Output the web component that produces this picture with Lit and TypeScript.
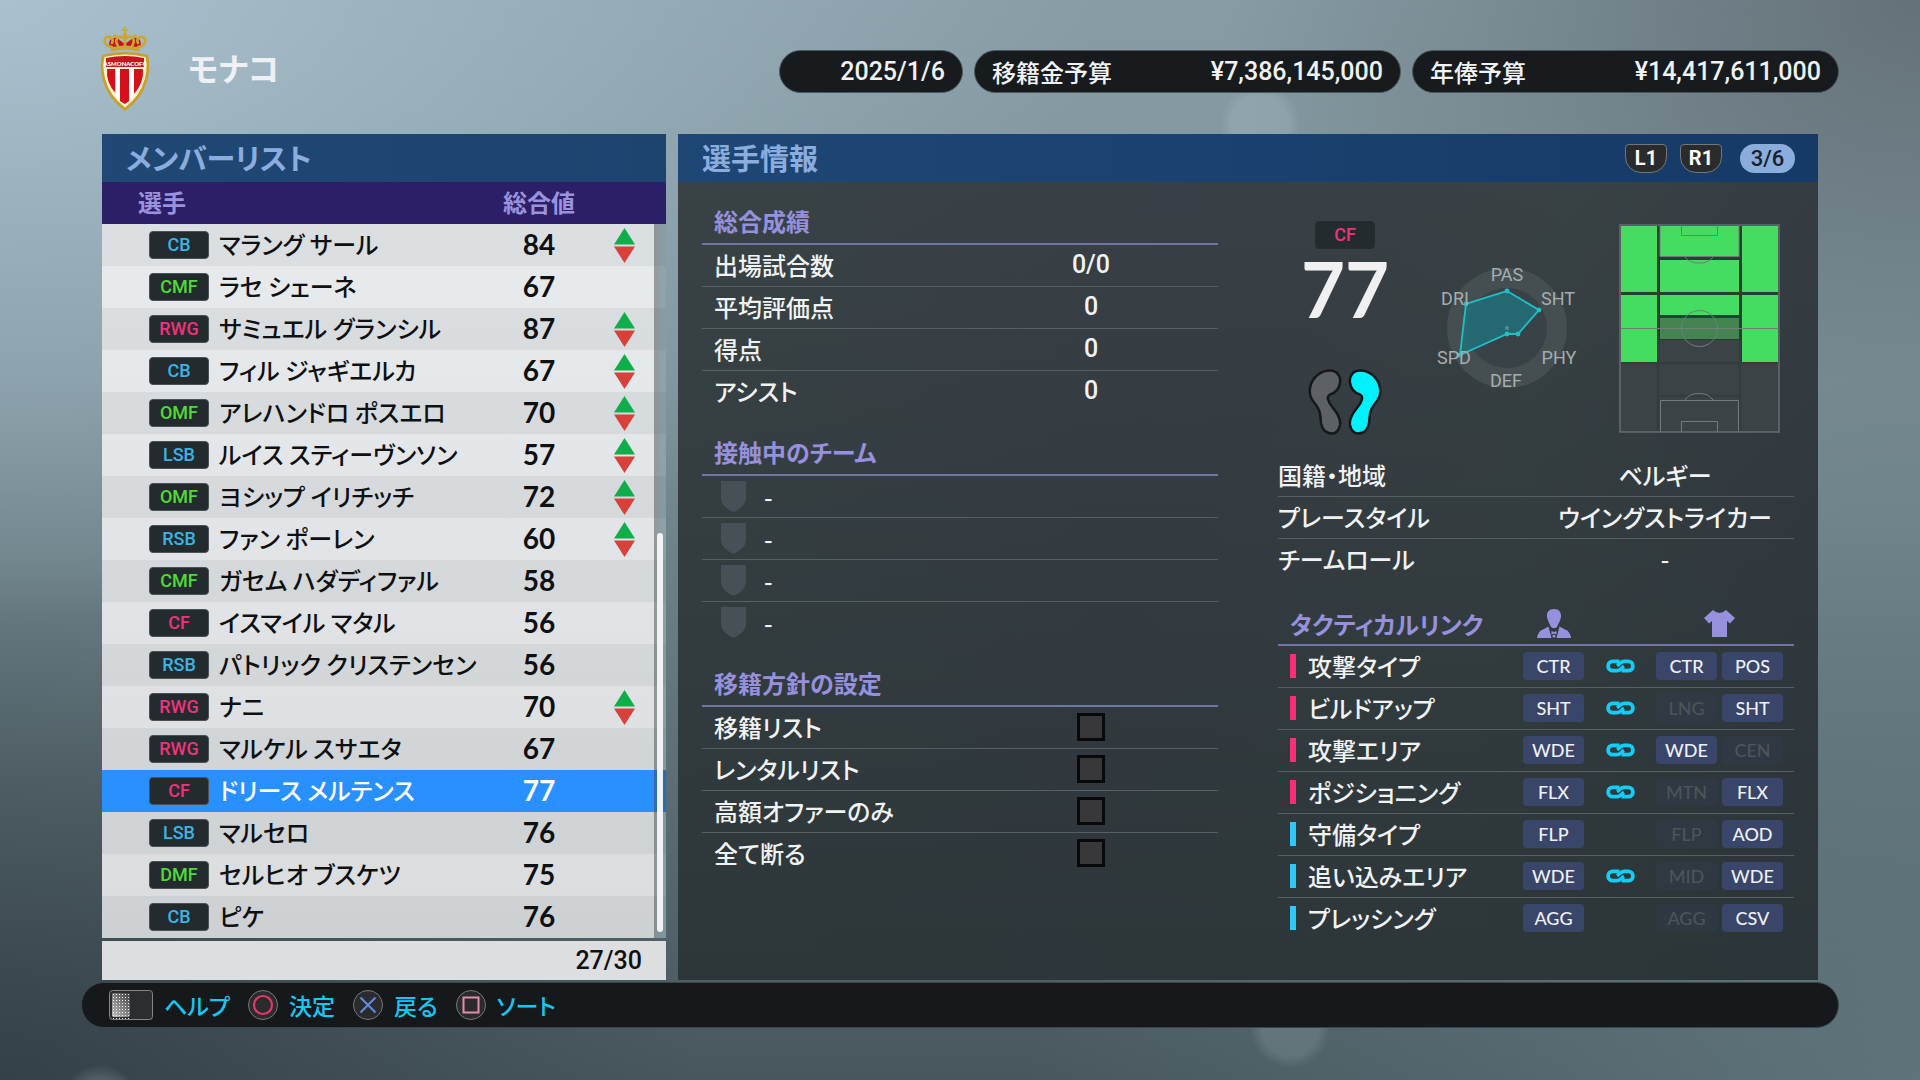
import { LitElement, html, svg, css, nothing } from "lit";
import { customElement, state } from "lit/decorators.js";
import { classMap } from "lit/directives/class-map.js";

type Line = "fw" | "mf" | "df";

interface Member {
  pos: string;
  name: string;
  rating: number;
  trade?: boolean;
}

const MEMBERS: Member[] = [
  { pos: "CB", name: "マラング サール", rating: 84, trade: true },
  { pos: "CMF", name: "ラセ シェーネ", rating: 67 },
  { pos: "RWG", name: "サミュエル グランシル", rating: 87, trade: true },
  { pos: "CB", name: "フィル ジャギエルカ", rating: 67, trade: true },
  { pos: "OMF", name: "アレハンドロ ポスエロ", rating: 70, trade: true },
  { pos: "LSB", name: "ルイス スティーヴンソン", rating: 57, trade: true },
  { pos: "OMF", name: "ヨシップ イリチッチ", rating: 72, trade: true },
  { pos: "RSB", name: "ファン ポーレン", rating: 60, trade: true },
  { pos: "CMF", name: "ガセム ハダディファル", rating: 58 },
  { pos: "CF", name: "イスマイル マタル", rating: 56 },
  { pos: "RSB", name: "パトリック クリステンセン", rating: 56 },
  { pos: "RWG", name: "ナニ", rating: 70, trade: true },
  { pos: "RWG", name: "マルケル スサエタ", rating: 67 },
  { pos: "CF", name: "ドリース メルテンス", rating: 77 },
  { pos: "LSB", name: "マルセロ", rating: 76 },
  { pos: "DMF", name: "セルヒオ ブスケツ", rating: 75 },
  { pos: "CB", name: "ピケ", rating: 76 },
];

const RESULTS: [string, string][] = [
  ["出場試合数", "0/0"],
  ["平均評価点", "0"],
  ["得点", "0"],
  ["アシスト", "0"],
];

const CONTACTS = ["-", "-", "-", "-"];

const POLICIES = ["移籍リスト", "レンタルリスト", "高額オファーのみ", "全て断る"];

const PROFILE: [string, string][] = [
  ["国籍・地域", "ベルギー"],
  ["プレースタイル", "ウイングストライカー"],
  ["チームロール", "-"],
];

interface Tactic {
  side: "attack" | "defence";
  label: string;
  player: string;
  linked: boolean;
  team: [string, boolean][];
}

const TACTICS: Tactic[] = [
  { side: "attack", label: "攻撃タイプ", player: "CTR", linked: true, team: [["CTR", true], ["POS", true]] },
  { side: "attack", label: "ビルドアップ", player: "SHT", linked: true, team: [["LNG", false], ["SHT", true]] },
  { side: "attack", label: "攻撃エリア", player: "WDE", linked: true, team: [["WDE", true], ["CEN", false]] },
  { side: "attack", label: "ポジショニング", player: "FLX", linked: true, team: [["MTN", false], ["FLX", true]] },
  { side: "defence", label: "守備タイプ", player: "FLP", linked: false, team: [["FLP", false], ["AOD", true]] },
  { side: "defence", label: "追い込みエリア", player: "WDE", linked: true, team: [["MID", false], ["WDE", true]] },
  { side: "defence", label: "プレッシング", player: "AGG", linked: false, team: [["AGG", false], ["CSV", true]] },
];

const lineOf = (pos: string): Line =>
  pos.endsWith("MF") ? "mf" : pos === "CF" || pos.endsWith("WG") ? "fw" : "df";

const badge = (pos: string) => html`<span class="badge ${lineOf(pos)}">${pos}</span>`;

const crest = html`
  <svg class="crest" viewBox="0 0 50 86" aria-hidden="true">
    <path d="M10 22C7 14 12 11 17 12L25 18L33 12C38 11 43 14 40 22Q25 17 10 22Z" fill="#c4161f"/>
    <g fill="none" stroke="#cfa52b" stroke-width="2.6" stroke-linecap="round">
      <path d="M25 1V8M22 4H28" stroke-width="1.6"/>
      <path d="M25 9V20M24 12C18 8 14 14 18 20M26 12C32 8 36 14 32 20"/>
      <path d="M12 21C4 20 3 13 7 11C11 10 14 13 12 17M38 21C46 20 47 13 43 11C39 10 36 13 38 17"/>
      <path d="M12 23.500Q25 20 38 23.500" stroke-width="3.400"/>
    </g>
    <circle cx="25" cy="9" r="2.200" fill="#cfa52b"/>
    <circle cx="15" cy="10" r="1.800" fill="#cfa52b"/>
    <circle cx="35" cy="10" r="1.800" fill="#cfa52b"/>
    <path d="M2 29Q25 23 48 29Q51 42 47 55Q42 73 25 85Q8 73 3 55Q-1 42 2 29Z" fill="#c9a02c"/>
    <path d="M4.500 31Q25 26 45.500 31Q48 42 44.500 54Q40 70 25 81.500Q10 70 5.500 54Q2 42 4.500 31Z" fill="#fff3cf"/>
    <path d="M6 32Q25 28 44 32L44 41H6Z" fill="#c4161f"/>
    <path d="M7 43H15.500V67Q6 57 7 43ZM20 43H29V75L25 78L20 75ZM34 43H43Q44 57 34 68Z" fill="#d5101b"/>
    <path d="M15.500 43H20V75L15.500 70ZM29 43H34V70L29 75Z" fill="#ffffff"/>
    <text x="25" y="39.500" text-anchor="middle" font-family="Lato, sans-serif" font-weight="900" font-size="6" fill="#fff">ASMONACOFC</text>
  </svg>`;

const feet = html`
  <svg class="feet" viewBox="0 0 74 66" role="img" aria-label="利き足 右">
    <g stroke="#14181b" stroke-width="2.500" stroke-linejoin="round">
      <path fill="#5d6165" d="M22 1.500C29 1.500 33 7 32 14C31 21 27 24 22 25.500C18 27.500 20 33 25 39C30 45 33 50 32 56C31 61 28 64.500 24 64.500C18 64.500 14 60 13 54C12 46 13 43 8 36C3 30 1 26 2 19C4 8 13 1.500 22 1.500Z"/>
      <path fill="#00f2ff" d="M52 1.500C45 1.500 41 7 42 14C43 21 47 24 52 25.500C56 27.500 54 33 49 39C44 45 41 50 42 56C43 61 46 64.500 50 64.500C56 64.500 60 60 61 54C62 46 61 43 66 36C71 30 73 26 72 19C70 8 61 1.500 52 1.500Z"/>
    </g>
  </svg>`;

const RADAR_LABELS: [string, number, number][] = [
  ["PAS", 70, 19],
  ["SHT", 121, 43],
  ["PHY", 122, 102],
  ["DEF", 69, 125],
  ["SPD", 17, 102],
  ["DRI", 18, 43],
];
const RADAR_POINTS: [number, number][] = [
  [70, 29],
  [102, 48],
  [81, 72],
  [70, 72],
  [23, 93],
  [29, 42],
];

const radar = html`
  <svg class="radar" viewBox="0 0 140 132" role="img" aria-label="能力チャート">
    <circle cx="70" cy="66" r="60" fill="#454f52"/>
    <circle cx="70" cy="66" r="40" fill="#394246"/>
    <polygon points=${RADAR_POINTS.map((p) => p.join(",")).join(" ")} fill="#1f727c" fill-opacity=".8" stroke="#1fc0c8" stroke-width="1.800"/>
    ${RADAR_POINTS.map(([x, y]) => svg`<circle cx=${x} cy=${y} r="2.4" fill="#1fc0c8"/>`)}
    <circle cx="70" cy="66" r="2" fill="#4d9299"/>
    ${RADAR_LABELS.map(([t, x, y]) => svg`<text x=${x} y=${y} text-anchor="middle">${t}</text>`)}
  </svg>`;

const pitch = html`
  <svg class="pitch" viewBox="0 0 161 209" role="img" aria-label="ポジション適性">
    <rect x="1" y="1" width="159" height="207" fill="#3c4347"/>
    <path d="M1 1H160V139H121V116H40V139H1Z" fill="#26402f"/>
    <path d="M39 116V207M121 116V207M1 139H160M40 172H120" stroke="#333c3e" stroke-width="2.500"/>
    <g fill="#45dc62">
      <rect x="2" y="2" width="36" height="66"/><rect x="2" y="71" width="36" height="67"/>
      <rect x="123" y="2" width="36" height="66"/><rect x="123" y="71" width="36" height="67"/>
      <rect x="41" y="2" width="79" height="31"/><rect x="41" y="36" width="79" height="32"/>
      <rect x="41" y="71" width="79" height="20"/>
    </g>
    <rect x="41" y="94" width="79" height="21" fill="#438451"/>
    <g fill="none" stroke="#727c7b" stroke-width="1">
      <path d="M1 104.500H160M41 1V32.500H120V1M62.500 1V11.500H98.500V1M66 33Q70 39 80 39Q90 39 94 33"/>
      <circle cx="80.500" cy="104.500" r="18"/>
      <path d="M41.500 208V176.500H119.500V208M62.500 208V197.500H98.500V208M66 176Q70 169.500 80 169.500Q90 169.500 94 176"/>
      <rect x="1" y="1" width="159" height="207" stroke="#666e72" stroke-width="1.500"/>
    </g>
  </svg>`;

const linkIcon = html`
  <svg class="link" viewBox="0 0 29 14" role="img" aria-label="リンク">
    <g fill="none" stroke="#12cdf5" stroke-width="3.800">
      <path d="M13.500 2.300H6.800a4.700 4.700 0 0 0 0 9.400h4.200c3.600 0 4-2.500 7-4.300"/>
      <path d="M15.500 11.700H22.200a4.700 4.700 0 0 0 0-9.400h-4.200c-3.600 0-4 2.500-7 4.300"/>
    </g>
  </svg>`;

const personIcon = html`
  <svg class="person" viewBox="0 0 34 29" role="img" aria-label="選手">
    <g fill="#9690dd">
      <path d="M17 0C22 0 24.500 3.500 24 8C23.500 12 21 15 20 18Q17 20.500 14 18C13 15 10.500 12 10 8C9.500 3.500 12 0 17 0Z"/>
      <path d="M11.500 17.500L14.500 29H0Q1 22 6 20.500ZM22.500 17.500L19.500 29H34Q33 22 28 20.500Z"/>
      <path d="M14.500 22L17 23L19.500 22V25.500L17 24.500L14.500 25.500ZM17 25.500L19 27L17 29L15 27Z"/>
    </g>
  </svg>`;

const shirtIcon = html`
  <svg class="shirt" viewBox="0 0 31 27" role="img" aria-label="チーム">
    <path fill="#9690dd" d="M9 0Q15.500 6 22 0L31 8L26 13.500L23 11V27H8V11L5 13.500L0 8Z"/>
  </svg>`;

const shieldIcon = html`
  <svg class="shield" viewBox="0 0 25 31" aria-hidden="true">
    <path d="M0 0H25V18Q24 26 12.500 31Q1 26 0 18Z" fill="#485057"/>
  </svg>`;

const tradeIcon = html`
  <svg class="trade" viewBox="0 0 21 35" role="img" aria-label="交渉可">
    <path d="M10.500 0L21 16.500H0Z" fill="#0fae4b"/>
    <path d="M10.500 35L21 18.500H0Z" fill="#d8403a"/>
  </svg>`;

const dots = Array.from({ length: 54 }, (_, i) => [4 + (i % 6) * 3, 4 + Math.floor(i / 6) * 3]);

const touchpadIcon = html`
  <svg class="pad" viewBox="0 0 44 30" aria-hidden="true">
    <defs>
      <linearGradient id="pad" x1="0" y1="1" x2="1" y2="0">
        <stop offset="0" stop-color="#c2c2c2"/><stop offset="1" stop-color="#3c3c3c"/>
      </linearGradient>
    </defs>
    <rect x=".5" y=".5" width="43" height="29" rx="3" fill="#2c2d2f" stroke="#85888a"/>
    <rect x="3" y="3" width="18" height="24" rx="2" fill="url(#pad)"/>
    ${dots.map(([x, y]) => svg`<rect x=${x} y=${y} width="1" height="1" fill="#f0f0f0"/>`)}
  </svg>`;

const padButton = (glyph: unknown) => html`
  <svg class="key" viewBox="0 0 30 30" aria-hidden="true">
    <circle cx="15" cy="15" r="14.500" fill="#2b2a2d" stroke="#77797c"/>
    ${glyph}
  </svg>`;

const circleKey = padButton(svg`<circle cx="15" cy="15" r="9" fill="none" stroke="#e0386a" stroke-width="2.200"/>`);
const crossKey = padButton(svg`<path d="M7.500 7.500L22.500 22.500M22.500 7.500L7.500 22.500" stroke="#5b8bd6" stroke-width="2.200"/>`);
const squareKey = padButton(svg`<rect x="7.500" y="7.500" width="15" height="15" fill="none" stroke="#dd8fb0" stroke-width="2"/>`);

@customElement("app-root")
export class AppRoot extends LitElement {
  @state() private selected = 13;

  static styles = css`
    :host {
      display: flex;
      flex-direction: column;
      box-sizing: border-box;
      min-height: 100vh;
      padding: 0 81px;
      font: 500 24px/30px "Noto Sans CJK JP", sans-serif;
      font-feature-settings: "palt";
      color: #f0f2f4;
      background:
        radial-gradient(circle at 1260px 124px, rgba(190, 212, 218, 0.2) 28px, transparent 40px),
        radial-gradient(circle at 1290px 1028px, rgba(170, 190, 195, 0.2) 28px, transparent 40px),
        radial-gradient(circle at 100px 1105px, rgba(170, 190, 195, 0.2) 28px, transparent 40px),
        radial-gradient(ellipse 1100px 620px at 0 0, rgba(180, 204, 220, 0.75), transparent),
        radial-gradient(ellipse 700px 520px at 0 100%, rgba(45, 55, 62, 0.7), transparent),
        radial-gradient(ellipse 700px 520px at 100% 0, rgba(92, 102, 109, 0.8), transparent),
        radial-gradient(ellipse 900px 700px at 100% 100%, rgba(104, 128, 134, 0.7), transparent),
        linear-gradient(#879ca5, #7c9199 35%, #5a6b72 75%, #48575e);
    }
    * { box-sizing: border-box; }
    h1, h2, h3, ul, p { margin: 0; padding: 0; }
    ul { list-style: none; }
    svg { display: block; flex: none; }
    button { font: inherit; color: inherit; padding: 0; margin: 0; border: 0; background: none; cursor: pointer; }
    table { width: 100%; border-collapse: separate; border-spacing: 0; table-layout: fixed; }
    th, td { padding: 0; font-weight: inherit; text-align: left; }

    .top { display: flex; align-items: flex-start; justify-content: space-between; padding: 26px 0 22px 19px; }
    .club { display: flex; align-items: center; gap: 38px; }
    .crest { width: 50px; height: 86px; }
    .club h1 { padding-bottom: 4px; font-size: 32px; line-height: 38px; font-weight: 700; color: #eef0f4; }
    .budgets { display: flex; gap: 11px; padding-top: 24px; }
    .pill {
      display: flex; align-items: center; justify-content: space-between;
      height: 43px; width: 427px; padding: 0 17px;
      border-radius: 22px; border: 1px solid #4b575c; background: #171b1e;
    }
    .pill.date { width: 184px; justify-content: flex-end; }
    .num { font-family: Roboto, "Noto Sans CJK JP", sans-serif; font-size: 25px; }

    .panels { display: grid; grid-template-columns: 564fr 1140fr; gap: 12px; padding: 0 21px; }
    .panel { display: flex; flex-direction: column; }
    .bar {
      display: flex; align-items: center; justify-content: space-between;
      height: 48px; padding: 0 24px; background: linear-gradient(90deg, #204874, #1d436f);
    }
    .bar h2 { padding-bottom: 2px; font-size: 29px; line-height: 34px; font-weight: 700; color: #8badde; }

    .list { position: relative; }
    .members thead th { height: 42px; padding-bottom: 2px; background: #2c1f68; color: #9b92de; font-weight: 700; }
    .members thead th:first-child { padding-left: 36px; }
    .members tbody { background: linear-gradient(#e8ebee, #dadcde); }
    .members tbody td { height: 42px; color: #0e1012; }
    .members tbody tr:nth-child(odd) td { background: rgba(60, 66, 72, 0.07); }
    .members tbody tr.on td { background: #2990ff; color: #fff; }
    .members .c-rating { width: 118px; text-align: center; }
    .members .c-trade { width: 52px; }
    .members .c-edge { width: 16px; }
    .pick { display: flex; align-items: center; gap: 10px; width: 100%; height: 42px; padding-left: 47px; }
    .pick span:last-child { padding-bottom: 2px; }
    .badge {
      flex: none; width: 60px; height: 28px; border-radius: 4px; border: 1px solid #4a5256; background: #242b2e;
      font: 500 18px/26px Roboto, sans-serif; text-align: center;
    }
    .badge.df { color: #3bb4e4; }
    .badge.mf { color: #4fdc33; }
    .badge.fw { color: #f0327a; }
    .rating { font: 700 28px/40px Lato, sans-serif; text-align: center; }
    .members .rating { padding-bottom: 2px; text-align: center; }
    .trade { width: 21px; height: 35px; margin: 0 auto; }
    .scroll {
      position: absolute; top: 42px; right: 0; bottom: 0; width: 12px;
      background: linear-gradient(90deg, rgba(70, 74, 76, 0.5), rgba(22, 66, 82, 0.42) 60%);
    }
    .thumb { position: absolute; left: 3px; right: 3px; top: 309px; bottom: 6px; border-radius: 3px; background: #f0f2f4; }
    .count {
      margin-top: 3px; height: 39px; padding-right: 24px;
      background: #dcdee0; color: #0e1012; text-align: right; line-height: 39px;
    }

    .info { background: linear-gradient(100deg, #394345, #383f46 40%, #384144 70%, #333a41); }
    .info .bar { background: linear-gradient(90deg, #1e4776, #163a68); padding-right: 23px; }
    .pager { display: flex; align-items: center; gap: 13px; }
    .bumper {
      width: 42px; height: 29px; border: 1px solid #74777a; border-radius: 4px 4px 16px 16px;
      background: #2a2b2d; color: #fff; font: 700 20px/26px Roboto, sans-serif;
    }
    .page {
      width: 55px; height: 29px; margin-left: 5px; border-radius: 15px; background: #8badde; color: #14202c;
      font: 500 22px/29px Roboto, sans-serif; text-align: center;
    }
    .body {
      flex: 1; display: grid; grid-template-columns: 1fr 1fr; gap: 60px; padding: 0 24px;
      background: linear-gradient(rgba(40, 48, 50, 0), rgba(40, 50, 52, 0.7));
    }
    .head {
      height: 63px; padding: 23px 12px 0; line-height: 32px; font-size: 24px; font-weight: 700;
      color: #9690dd; border-bottom: 2px solid #6f75a6;
    }
    .rows th, .rows td { height: 42px; padding-bottom: 2px; border-bottom: 1px solid #566064; }
    .rows tr:last-child th, .rows tr:last-child td { border-bottom-color: transparent; }
    .rows td { width: 50%; text-align: center; }
    .stats th { padding-left: 12px; }
    .stats td { width: 254px; }
    .item { display: flex; align-items: center; height: 42px; border-bottom: 1px solid #566064; }
    .item:last-child { border-bottom-color: transparent; }
    .shield { width: 25px; height: 31px; margin: 0 18px 0 19px; }
    .item label { flex: 1; padding: 0 0 2px 12px; }
    .item input {
      appearance: none; width: 28px; height: 28px; margin: 0 113px 2px 0;
      border: 3px solid #08090a; background: #383739;
    }
    .item input:checked { background: #12cdf5; }

    .hero { display: flex; justify-content: space-between; height: 273px; padding: 39px 14px 0 24px; }
    .score { display: flex; flex-direction: column; align-items: center; width: 86px; }
    .score .badge { border-color: #262d30; }
    .big { font: 700 76px/80px Lato, sans-serif; color: #f0f0f2; }
    .feet { width: 74px; height: 66px; margin-top: 40px; }
    .radar { width: 140px; height: 132px; margin: 41px 0 0 6px; }
    .radar text { font: 18px Roboto, sans-serif; fill: #a6adaf; }
    .pitch { width: 161px; height: 209px; margin-top: 3px; }

    .tactics thead th { height: 65px; padding-top: 22px; border-bottom: 2px solid #6f75a6; color: #9690dd; font-weight: 700; }
    .tactics thead th:first-child { padding-left: 12px; }
    .tactics tbody th, .tactics tbody td { height: 42px; padding-bottom: 2px; border-bottom: 1px solid #566064; }
    .tactics tbody tr:last-child th, .tactics tbody tr:last-child td { border-bottom-color: transparent; }
    .tactics .c-own { width: 61px; }
    .tactics .c-link { width: 72px; }
    .tactics .c-team { width: 138px; padding-right: 11px; }
    .person { width: 34px; height: 29px; margin: 0 auto; }
    .shirt { width: 31px; height: 27px; margin: 0 auto; }
    .link { width: 29px; height: 14px; margin: 0 auto; }
    .trait { display: flex; align-items: center; gap: 12px; padding-left: 12px; }
    .trait::before { content: ""; width: 6px; height: 24px; background: #2fc8f8; }
    .trait.attack::before { background: #fb2e77; }
    .chips { display: flex; gap: 5px; }
    .chip {
      width: 61px; height: 28px; border-radius: 4px; background: #3a456a; color: #eef0f6;
      font: 500 18px/28px Lato, sans-serif; text-align: center;
    }
    .chip.off { background: rgba(52, 64, 82, 0.35); color: #4b545a; }

    .guide {
      display: flex; align-items: center; gap: 18px; height: 46px; margin-top: 2px; padding: 0 27px;
      border: 1px solid #39464c; border-radius: 23px; background: #15191c; color: #14c8f4; font-size: 23px;
    }
    .guide button { display: flex; align-items: center; gap: 11px; }
    .pad { width: 44px; height: 30px; }
    .key { width: 30px; height: 30px; }
  `;

  private memberRow = (m: Member, i: number) => html`
    <tr class=${classMap({ on: i === this.selected })}>
      <td><button class="pick" @click=${() => (this.selected = i)}>${badge(m.pos)}<span>${m.name}</span></button></td>
      <td class="rating">${m.rating}</td>
      <td>${m.trade ? tradeIcon : nothing}</td>
      <td></td>
    </tr>`;

  private tacticRow = (t: Tactic) => html`
    <tr>
      <th scope="row"><div class="trait ${t.side}">${t.label}</div></th>
      <td><div class="chip">${t.player}</div></td>
      <td>${t.linked ? linkIcon : nothing}</td>
      <td>
        <div class="chips">
          ${t.team.map(([code, on]) => html`<div class=${classMap({ chip: true, off: !on })}>${code}</div>`)}
        </div>
      </td>
    </tr>`;

  render() {
    return html`
      <header class="top">
        <div class="club">${crest}<h1>モナコ</h1></div>
        <div class="budgets">
          <div class="pill date"><span class="num">2025/1/6</span></div>
          <div class="pill"><span>移籍金予算</span><span class="num">¥7,386,145,000</span></div>
          <div class="pill"><span>年俸予算</span><span class="num">¥14,417,611,000</span></div>
        </div>
      </header>

      <main class="panels">
        <section class="panel">
          <div class="bar"><h2>メンバーリスト</h2></div>
          <div class="list">
            <table class="members">
              <thead>
                <tr>
                  <th scope="col">選手</th>
                  <th scope="col" class="c-rating">総合値</th>
                  <th class="c-trade"></th>
                  <th class="c-edge"></th>
                </tr>
              </thead>
              <tbody>${MEMBERS.map(this.memberRow)}</tbody>
            </table>
            <div class="scroll"><div class="thumb"></div></div>
          </div>
          <p class="count num">27/30</p>
        </section>

        <section class="panel info">
          <div class="bar">
            <h2>選手情報</h2>
            <div class="pager">
              <button class="bumper">L1</button>
              <button class="bumper">R1</button>
              <span class="page">3/6</span>
            </div>
          </div>
          <div class="body">
            <div>
              <h3 class="head">総合成績</h3>
              <table class="rows stats">
                ${RESULTS.map(([k, v]) => html`<tr><th scope="row">${k}</th><td class="num">${v}</td></tr>`)}
              </table>
              <h3 class="head">接触中のチーム</h3>
              <ul>${CONTACTS.map((c) => html`<li class="item">${shieldIcon}<span>${c}</span></li>`)}</ul>
              <h3 class="head">移籍方針の設定</h3>
              <ul>
                ${POLICIES.map(
                  (p, i) => html`<li class="item">
                    <label for="policy-${i}">${p}</label><input id="policy-${i}" type="checkbox" />
                  </li>`,
                )}
              </ul>
            </div>
            <div>
              <div class="hero">
                <div class="score">${badge("CF")}<span class="big">77</span>${feet}</div>
                ${radar} ${pitch}
              </div>
              <table class="rows">
                ${PROFILE.map(([k, v]) => html`<tr><th scope="row">${k}</th><td>${v}</td></tr>`)}
              </table>
              <table class="tactics">
                <thead>
                  <tr>
                    <th scope="col">タクティカルリンク</th>
                    <th scope="col" class="c-own">${personIcon}</th>
                    <th class="c-link"></th>
                    <th scope="col" class="c-team">${shirtIcon}</th>
                  </tr>
                </thead>
                <tbody>${TACTICS.map(this.tacticRow)}</tbody>
              </table>
            </div>
          </div>
        </section>
      </main>

      <footer class="guide">
        <button>${touchpadIcon}ヘルプ</button>
        <button>${circleKey}決定</button>
        <button>${crossKey}戻る</button>
        <button>${squareKey}ソート</button>
      </footer>
    `;
  }
}
